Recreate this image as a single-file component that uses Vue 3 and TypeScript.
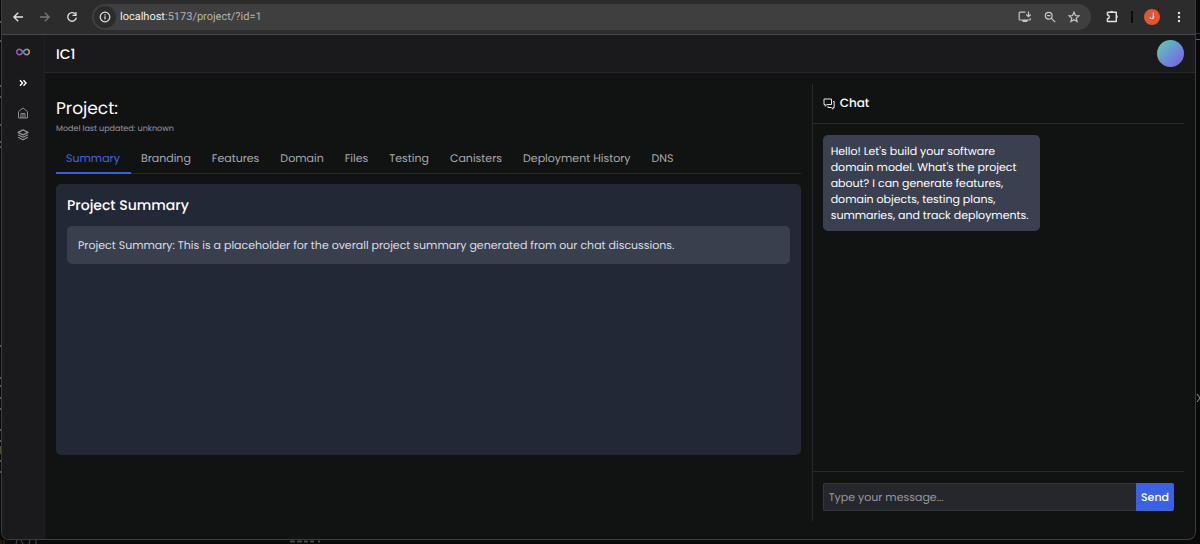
<script setup lang="ts">
import { ref } from 'vue'

const tabs: string[] = ['Summary', 'Branding', 'Features', 'Domain', 'Files', 'Testing', 'Canisters', 'Deployment History', 'DNS']
const active = ref<string>('Summary')
const message = ref<string>('')
</script>

<template>
  <div class="desktop">
    <svg class="edge-left" width="2" height="544" viewBox="0 0 2 544" aria-hidden="true">
      <path d="M0 22h1M0 41h1M0 86h1M0 97h1M0 125h2M0 142h1M0 147h1M0 346h1M0 378h2M0 386h1M0 398h2M0 409h2M0 430h1M0 441h2M0 461h1M0 472h2" stroke="#5a5a5a" stroke-width="2" />
      <path d="M0 450h2" stroke="#4d4935" stroke-width="8" />
    </svg>
    <svg class="edge-right" width="4" height="60" viewBox="0 0 4 60" aria-hidden="true">
      <path d="M0 33.500h4" stroke="#333" />
      <path d="M0 39.500h4" stroke="#7a5730" />
    </svg>
    <svg class="edge-bottom" width="330" height="4" viewBox="0 0 330 4" aria-hidden="true">
      <path d="M1 0v4M4 0v4" stroke="#4a3010" />
      <path d="M17 0l-1 4M21 0l2 4M30 0l-1 4M36 0v4" stroke="#4c4c4c" fill="none" />
      <path d="M290 1.500h5M297 1.500h5M304 1.500h4M310 1.500h4M318 1.500h2" stroke="#484848" stroke-width="2" />
    </svg>
    <svg class="chevron" width="4" height="10" viewBox="0 0 4 10" aria-hidden="true">
      <path d="M1 1l3 4-3 4" fill="none" stroke="#9a9a9a" />
    </svg>
    <div class="window">
      <header class="browser">
        <button class="icon" type="button" aria-label="Back">
          <svg width="12" height="12" viewBox="0 0 12 12"><path d="M11 6H2M6.200 1.700L1.900 6 6.200 10.300" fill="none" stroke="#e3e3e3" stroke-width="1.300" /></svg>
        </button>
        <button class="icon" type="button" aria-label="Forward">
          <svg width="12" height="12" viewBox="0 0 12 12"><path d="M1 6H10M5.800 1.700L10.100 6 5.800 10.300" fill="none" stroke="#777" stroke-width="1.300" /></svg>
        </button>
        <button class="icon" type="button" aria-label="Reload">
          <svg width="12" height="12" viewBox="0 0 12 12"><path d="M9.800 3.800A4.300 4.300 0 1 0 10.300 6.600" fill="none" stroke="#e3e3e3" stroke-width="1.300" /><path d="M10.600 1v4H6.600V3.800h2.800V1z" fill="#e3e3e3" /></svg>
        </button>
        <div class="omnibox">
          <button class="info" type="button" aria-label="Site information">
            <svg width="12" height="12" viewBox="0 0 12 12"><circle cx="6" cy="6" r="4.800" fill="none" stroke="#e3e3e3" stroke-width="1.200" /><path d="M6 5.300v3.300M6 3.200v1.300" stroke="#e3e3e3" stroke-width="1.200" /></svg>
          </button>
          <a class="url" href="#"><span class="host">localhost</span>:5173/project/?id=1</a>
          <button class="icon" type="button" aria-label="Install">
            <svg width="14" height="12" viewBox="0 0 14 12"><path d="M7.500 1.200H2a.8.800 0 0 0-.8.800v6.200a.8.800 0 0 0 .8.800h9.500a.8.800 0 0 0 .8-.8V7.300M10.500.500v5M8.300 3.500l2.200 2.200 2.200-2.200" fill="none" stroke="#c7c7c7" stroke-width="1.200" /><path d="M4.500 9h5v2h-5z" fill="#c7c7c7" /></svg>
          </button>
          <button class="icon" type="button" aria-label="Zoom">
            <svg width="12" height="12" viewBox="0 0 12 12"><circle cx="4.700" cy="4.700" r="3.400" fill="none" stroke="#c7c7c7" stroke-width="1.200" /><path d="M7.200 7.200l4 4M3 4.700h3.400" stroke="#c7c7c7" stroke-width="1.200" /></svg>
          </button>
          <button class="icon" type="button" aria-label="Bookmark">
            <svg width="12" height="12" viewBox="0 0 12 12"><path d="M6 1.200l1.400 3.300 3.500.3-2.700 2.300.9 3.500L6 8.800l-3.100 1.800.9-3.500L1.100 4.800l3.500-.3z" fill="none" stroke="#c7c7c7" stroke-width="1.200" /></svg>
          </button>
        </div>
        <button class="icon" type="button" aria-label="Extensions">
          <svg width="13" height="13" viewBox="0 0 13 13"><path d="M1.400 2.200h8.900v3.200M10.300 7.600v3.900H1.400V8.700a1.800 1.800 0 0 0 0-3.700V2.200" fill="none" stroke="#e3e3e3" stroke-width="1.400" stroke-linejoin="round" /><path d="M4.300 2.200a1.500 1.500 0 0 1 3 0zM10.300 5a1.500 1.500 0 0 1 0 3z" fill="#e3e3e3" /><path d="M10.300 5v3" stroke="#e3e3e3" stroke-width="1.400" /></svg>
        </button>
        <span class="divider"></span>
        <button class="profile" type="button">J</button>
        <button class="icon" type="button" aria-label="Menu">
          <svg width="4" height="12" viewBox="0 0 4 12"><g fill="#e3e3e3"><circle cx="2" cy="2" r="1.200" /><circle cx="2" cy="6" r="1.200" /><circle cx="2" cy="10" r="1.200" /></g></svg>
        </button>
      </header>

      <div class="app">
        <nav class="rail" aria-label="Main">
          <a class="brand" href="#" aria-label="Home page">
            <svg width="14" height="8" viewBox="0 0 14 8">
              <defs>
                <linearGradient id="warm" x1="0" y1="0" x2="1" y2="0"><stop offset="0" stop-color="#8e4fc4" /><stop offset=".500" stop-color="#c9559f" /><stop offset="1" stop-color="#39a7e0" /></linearGradient>
                <linearGradient id="gold" x1="0" y1="0" x2="1" y2="0"><stop offset="0" stop-color="#39a7e0" /><stop offset=".450" stop-color="#8f91a8" /><stop offset="1" stop-color="#ee8f3d" /></linearGradient>
              </defs>
              <path d="M7 4C5.600 2.200 4.800 1.200 3.500 1.200a2.800 2.800 0 0 0 0 5.600C4.800 6.800 5.600 5.800 7 4" fill="none" stroke="url(#warm)" stroke-width="1.500" />
              <path d="M7 4c1.400-1.800 2.200-2.800 3.500-2.800a2.800 2.800 0 0 1 0 5.600C9.200 6.800 8.400 5.800 7 4" fill="none" stroke="url(#gold)" stroke-width="1.500" />
            </svg>
          </a>
          <button class="expand" type="button" aria-label="Expand">
            <svg width="8" height="8" viewBox="0 0 8 8"><path d="M1 1.300L3.500 4 1 6.700M4.500 1.300L7 4 4.500 6.700" fill="none" stroke="#fff" stroke-width="1.400" /></svg>
          </button>
          <a class="rail-link" href="#" aria-label="Home">
            <svg width="12" height="12" viewBox="0 0 12 12"><path d="M1.500 4.600L6 1l4.500 3.600v6.400h-9zM4 11V6.500h4V11M6 6.500V11" fill="none" stroke="#8c8c90" stroke-linejoin="round" /></svg>
          </a>
          <a class="rail-link" href="#" aria-label="Layers">
            <svg width="12" height="12" viewBox="0 0 12 12"><path d="M6 .900l5 2.500-5 2.500-5-2.500zM1 5.800l5 2.500 5-2.500M1 8.200l5 2.600 5-2.600" fill="none" stroke="#929296" stroke-width="1.200" stroke-linejoin="round" /></svg>
          </a>
        </nav>

        <div class="page">
          <header class="topbar">
            <span class="name">IC1</span>
            <button class="avatar" type="button" aria-label="Account"></button>
          </header>

          <div class="columns">
            <main class="main">
              <h1>Project:</h1>
              <p class="updated">Model last updated: unknown</p>
              <div class="tabs" role="tablist">
                <button v-for="tab in tabs" :key="tab" type="button" role="tab" class="tab" :class="{ active: tab === active }" :aria-selected="tab === active" @click="active = tab">{{ tab }}</button>
              </div>
              <section class="panel">
                <h2>Project Summary</h2>
                <p class="summary">Project Summary: This is a placeholder for the overall project summary generated from our chat discussions.</p>
              </section>
            </main>

            <aside class="chat">
              <h2 class="chat-head">
                <svg width="12" height="12" viewBox="0 0 12 12" aria-hidden="true"><path d="M1 1h7.500v5.500H4L2.200 8.300V6.500H1zM10 3.500h1.200V9.500h-1.200v1.700L8.200 9.500H5V8" fill="none" stroke="#e8e8e8" /></svg>
                Chat
              </h2>
              <div class="log">
                <p class="bubble">Hello! Let's build your software domain model. What's the project about? I can generate features, domain objects, testing plans, summaries, and track deployments.</p>
              </div>
              <form class="composer" @submit.prevent>
                <input v-model="message" type="text" aria-label="Message" placeholder="Type your message..." />
                <button type="submit">Send</button>
              </form>
            </aside>
          </div>
        </div>
      </div>
    </div>
  </div>
</template>

<style>
body { background: #0a0909; }
</style>

<style scoped>
* { box-sizing: border-box; }
.desktop {
  position: relative;
  height: 100vh;
  padding: 0 4px 4px 1px;
  background: #0a0909;
  color: #fff;
  font: 11px/16px Poppins, Inter, sans-serif;
  text-rendering: geometricPrecision;
  overflow: hidden;
}
h1, h2, p { margin: 0; font-weight: 400; }
button, input { font: inherit; color: inherit; text-rendering: inherit; border: 0; padding: 0; margin: 0; background: none; }
a { color: inherit; text-decoration: none; }
svg { display: block; }
.edge-left { position: absolute; left: 0; top: 0; }
.edge-right { position: absolute; right: 0; top: 0; }
.edge-bottom { position: absolute; left: 0; bottom: 0; }
.chevron { position: absolute; right: 0; top: 393px; }
.window {
  position: relative;
  height: 100%;
  display: flex;
  flex-direction: column;
  border: 1px solid #3c3c3d;
  border-top: 0;
  border-radius: 0 0 8px 8px;
  background: #111312;
  overflow: hidden;
}
.browser {
  display: flex;
  align-items: center;
  height: 35px;
  flex: none;
  padding: 0 14px 1px 10px;
  gap: 15px;
  background: #2c2c2c;
  border-bottom: 1px solid #4a4a4a;
}
.icon { flex: none; }
.omnibox {
  flex: 1;
  display: flex;
  align-items: center;
  gap: 12px;
  height: 26px;
  margin-left: -1px;
  padding: 0 11px 0 2px;
  border-radius: 13px;
  background: #3f3f3f;
}
.info { display: grid; place-items: center; width: 22px; height: 22px; border-radius: 50%; background: #2c2c2c; }
.url { flex: 1; margin-left: -8px; font: 11px/16px Roboto, sans-serif; color: #b4b4b4; }
.host { color: #f1f1f1; }
.divider { width: 2px; height: 12px; margin-left: -3px; background: #0c0c0c; }
.profile { width: 16px; height: 16px; border-radius: 50%; background: #e4552d; font: 9px/16px Roboto, sans-serif; margin: 0 2px 0 -4px; }
.app { flex: 1; display: flex; min-height: 0; }
.rail {
  flex: none;
  width: 43px;
  display: flex;
  flex-direction: column;
  align-items: center;
  padding-top: 13px;
  background: #1a1a1c;
  border-right: 1px solid #202022;
}
.expand { margin: 23px 0 20px; }
.rail-link { margin-bottom: 10px; }
.page { flex: 1; min-width: 0; display: flex; flex-direction: column; }
.topbar {
  height: 38px;
  flex: none;
  display: flex;
  align-items: center;
  justify-content: space-between;
  padding: 0 11px 0 11px;
  background: #1a1a1c;
  border-bottom: 1px solid #28282a;
}
.name { font-size: 14px; font-weight: 500; }
.avatar { width: 27px; height: 27px; border-radius: 50%; background: linear-gradient(135deg, #5fd2a8, #6b92d4 50%, #7b5be6); }
.columns {
  flex: 1;
  min-height: 0;
  display: grid;
  grid-template-columns: 2fr 1fr;
  gap: 11px;
  padding: 11px 11px 18px 11px;
}
.main { min-width: 0; display: flex; flex-direction: column; padding: 12px 0 66px; }
h1 { font-size: 17px; line-height: 24px; }
.updated { margin-top: 3px; font-size: 8px; line-height: 12px; color: #97989c; }
.tabs { display: flex; margin-top: 8px; border-bottom: 1px solid #28292b; }
.tab { padding: 7px 11px 6px 10px; margin-bottom: -1px; border-bottom: 2px solid transparent; color: #a8a9af; white-space: nowrap; }
.tab.active { color: #4267e0; border-color: #3a5fd9; }
.panel { flex: 1; margin-top: 10px; padding: 11px; border-radius: 5px; background: #222835; }
.panel h2 { font-size: 14px; line-height: 20px; font-weight: 500; }
.summary { margin-top: 11px; padding: 11px; border-radius: 5px; background: #3a3f4e; color: #dcdee4; }
.chat { min-width: 0; display: flex; flex-direction: column; border-left: 1px solid #28292b; }
.chat-head { display: flex; align-items: center; gap: 5px; height: 40px; padding: 0 10px; border-bottom: 1px solid #28292b; font-weight: 500; font-size: 12px; }
.log { flex: 1; padding: 11px 10px; }
.bubble { width: 62%; padding: 8px; border-radius: 5px; background: #3a4050; }
.composer { display: flex; padding: 11px 10px 10px; border-top: 1px solid #28292b; }
.composer input { flex: 1; min-width: 0; height: 28px; padding: 0 5px; border: 1px solid #36373c; border-right: 0; border-radius: 2px 0 0 2px; background: #26272c; outline: 0; }
.composer input::placeholder { color: #96979d; opacity: 1; }
.composer button { padding: 0 5px; border-radius: 0 2px 2px 0; background: #3a62e2; font-weight: 500; }
</style>
